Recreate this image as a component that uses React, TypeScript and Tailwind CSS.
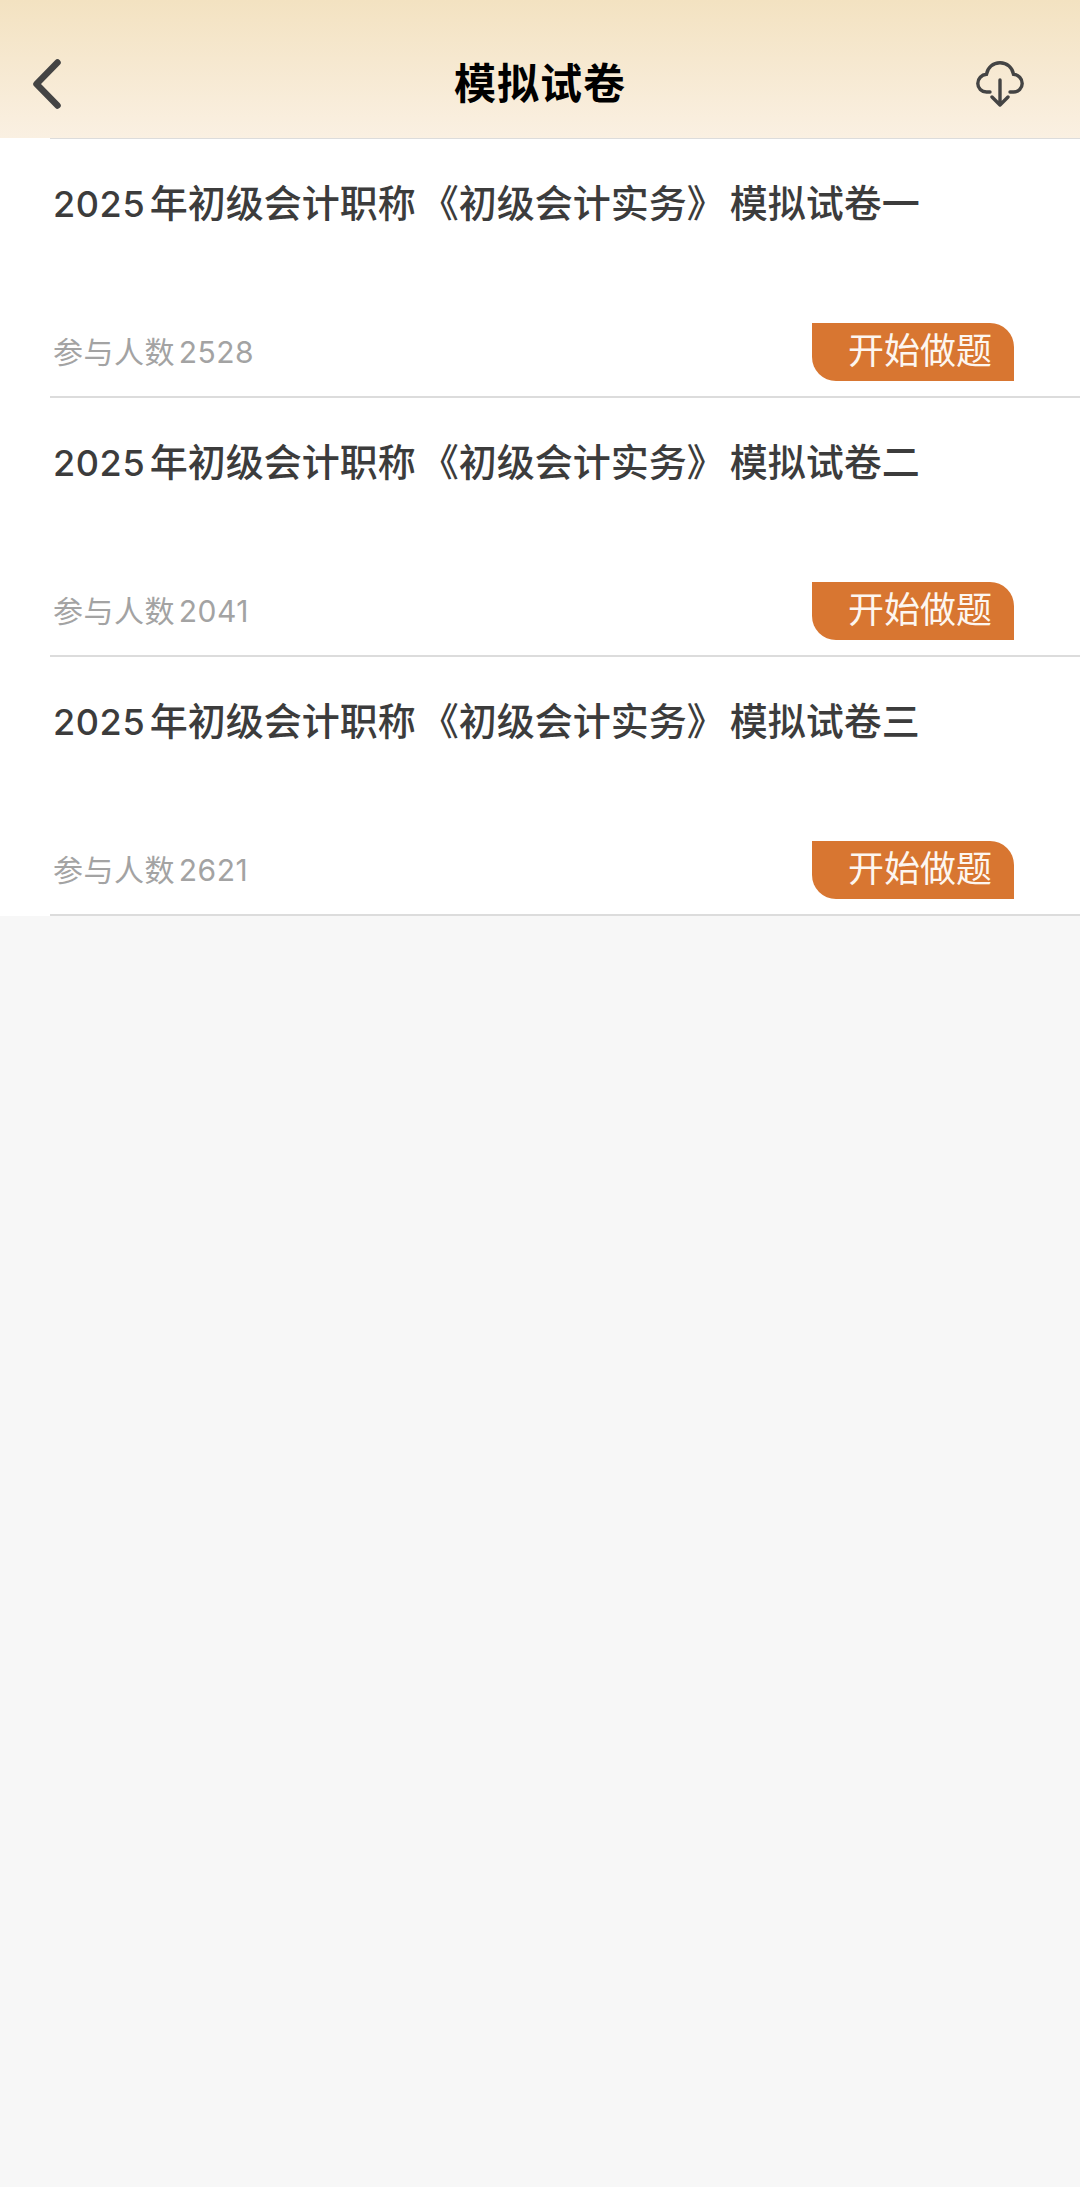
const font = { fontFamily: '"Inter", "Noto Sans CJK SC", sans-serif' };

const papers = [
  { suffix: "一", count: "2528" },
  { suffix: "二", count: "2041" },
  { suffix: "三", count: "2621" },
];

function Row({ suffix, count, first }: { suffix: string; count: string; first: boolean }) {
  return (
    <div className="pl-[50px] bg-white">
      <div className={first ? "h-[260px] border-t border-b-2 border-[#dcdcdc] flex flex-col" : "h-[259px] border-b-2 border-[#dcdcdc] flex flex-col"}>
        <div className="pl-[3px] pt-[38px] text-[38px] leading-[52px] font-medium text-[#3c3c3c] whitespace-nowrap [text-autospace:normal]">
          <span className="text-[36px] tracking-[0.6px]">2025</span>年初级会计职称<span className="ml-[5px]">《</span>初级会计实务<span className="mr-[5px]">》</span>模拟试卷{suffix}
        </div>
        <div className="mt-auto mb-[15px] flex items-center justify-between pl-[3px] pr-[66px]">
          <span className="text-[30px] leading-[58px] tracking-[0.5px] text-[#a3a3a3] [text-autospace:normal]">参与人数{count}</span>
          <span className="w-[202px] h-[58px] bg-[#d87631] rounded-tr-[24px] rounded-bl-[24px] text-[#fdf6f0] text-[36px] leading-[56px] pl-[36px] whitespace-nowrap">
            开始做题
          </span>
        </div>
      </div>
    </div>
  );
}

export default function App() {
  return (
    <div style={font} className="w-[1080px] h-[2187px] bg-[#f7f7f7] flex flex-col overflow-hidden">
      <header className="h-[138px] shrink-0 bg-gradient-to-b from-[#f3e2c1] to-[#faf0e2] flex items-center pt-[30px] px-[33px]">
        <div className="flex-1 flex justify-start">
          <svg width="28" height="50" viewBox="0 0 28 50" fill="none">
            <path d="M24.5 3.5 L3.5 25 L24.5 46.5" stroke="#444444" strokeWidth="6.5" strokeLinecap="round" strokeLinejoin="round" />
          </svg>
        </div>
        <h1 className="text-[42px] leading-[52px] font-bold text-black tracking-[1px] whitespace-nowrap">模拟试卷</h1>
        <div className="flex-1 flex justify-end">
          <svg width="48" height="46" viewBox="0 0 48 46" fill="none" className="mr-[23px]">
            <path
              d="M14 31 H10.5 C5.5 31 1.8 27 1.8 22.5 C1.8 17.5 5.5 13.8 10.5 13.3 C11.5 6.5 17 1.8 24 1.8 C31 1.8 36.5 6.5 37.5 13.3 C42.5 13.8 46.2 17.5 46.2 22.5 C46.2 27 42.5 31 37.5 31 H34"
              stroke="#444444"
              strokeWidth="3.4"
              strokeLinecap="round"
            />
            <path d="M24 19 V44 M16 36 L24 44 L32 36" stroke="#444444" strokeWidth="3.4" strokeLinecap="round" strokeLinejoin="round" />
          </svg>
        </div>
      </header>
      {papers.map((p, i) => (
        <Row key={p.suffix} suffix={p.suffix} count={p.count} first={i === 0} />
      ))}
    </div>
  );
}
